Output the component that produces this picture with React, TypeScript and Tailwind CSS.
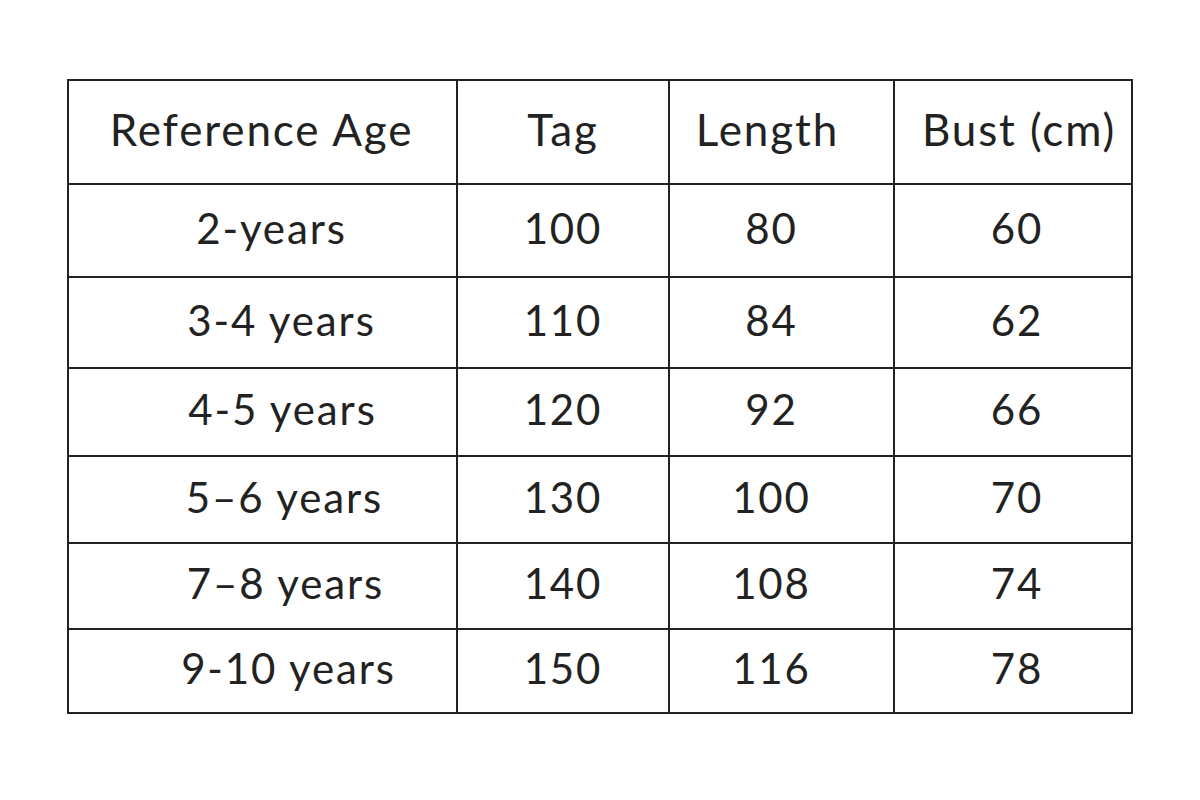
const header = ['Reference Age', 'Tag', 'Length', 'Bust (cm)'];

// first-column offsets vary row by row in the chart
const rows: { cells: string[]; h: string; first: string }[] = [
  { cells: ['2-years', '100', '80', '60'], h: 'h-[93px]', first: 'pl-[18px]' },
  { cells: ['3-4 years', '110', '84', '62'], h: 'h-[91px]', first: 'pl-[38px]' },
  { cells: ['4-5 years', '120', '92', '66'], h: 'h-[88px]', first: 'pl-[40px]' },
  { cells: ['5–6 years', '130', '100', '70'], h: 'h-[87px]', first: 'pl-[44px]' },
  { cells: ['7–8 years', '140', '108', '74'], h: 'h-[86px]', first: 'pl-[46px]' },
  { cells: ['9-10 years', '150', '116', '78'], h: 'h-[84px]', first: 'pl-[52px]' },
];

const colPad = ['', 'pl-0', 'pr-[20px]', 'pl-[8px]'];
const headPad = ['pr-[2px]', 'pl-0', 'pr-[28px]', 'pl-[12px]'];

function Row({ cells, h, head, first }: { cells: string[]; h: string; head?: boolean; first?: string }) {
  return (
    <div
      className={`grid grid-cols-[387px_212px_225px_238px] ${h} ${
        head ? 'text-[44px]' : 'border-t-2 border-[#222]'
      }`}
    >
      {cells.map((c, i) => (
        <div
          key={i}
          className={`flex items-center justify-center ${head ? 'pb-[6px]' : 'pb-[5px]'} ${
            i > 0 ? 'border-l-2 border-[#222]' : ''
          } ${head ? headPad[i] : i === 0 ? first : colPad[i]}`}
        >
          {c}
        </div>
      ))}
    </div>
  );
}

export default function App() {
  return (
    <div
      className="w-[1200px] h-[800px] bg-white pt-[79px] pl-[67px] text-[#222] text-[42px] tracking-[0.045em]"
      style={{ fontFamily: 'Lato, "Noto Sans", sans-serif' }}
    >
      <div className="w-[1066px] border-2 border-[#222] box-border">
        <Row cells={header} h="h-[102px]" head />
        {rows.map((r, i) => (
          <Row key={i} cells={r.cells} h={r.h} first={r.first} />
        ))}
      </div>
    </div>
  );
}
